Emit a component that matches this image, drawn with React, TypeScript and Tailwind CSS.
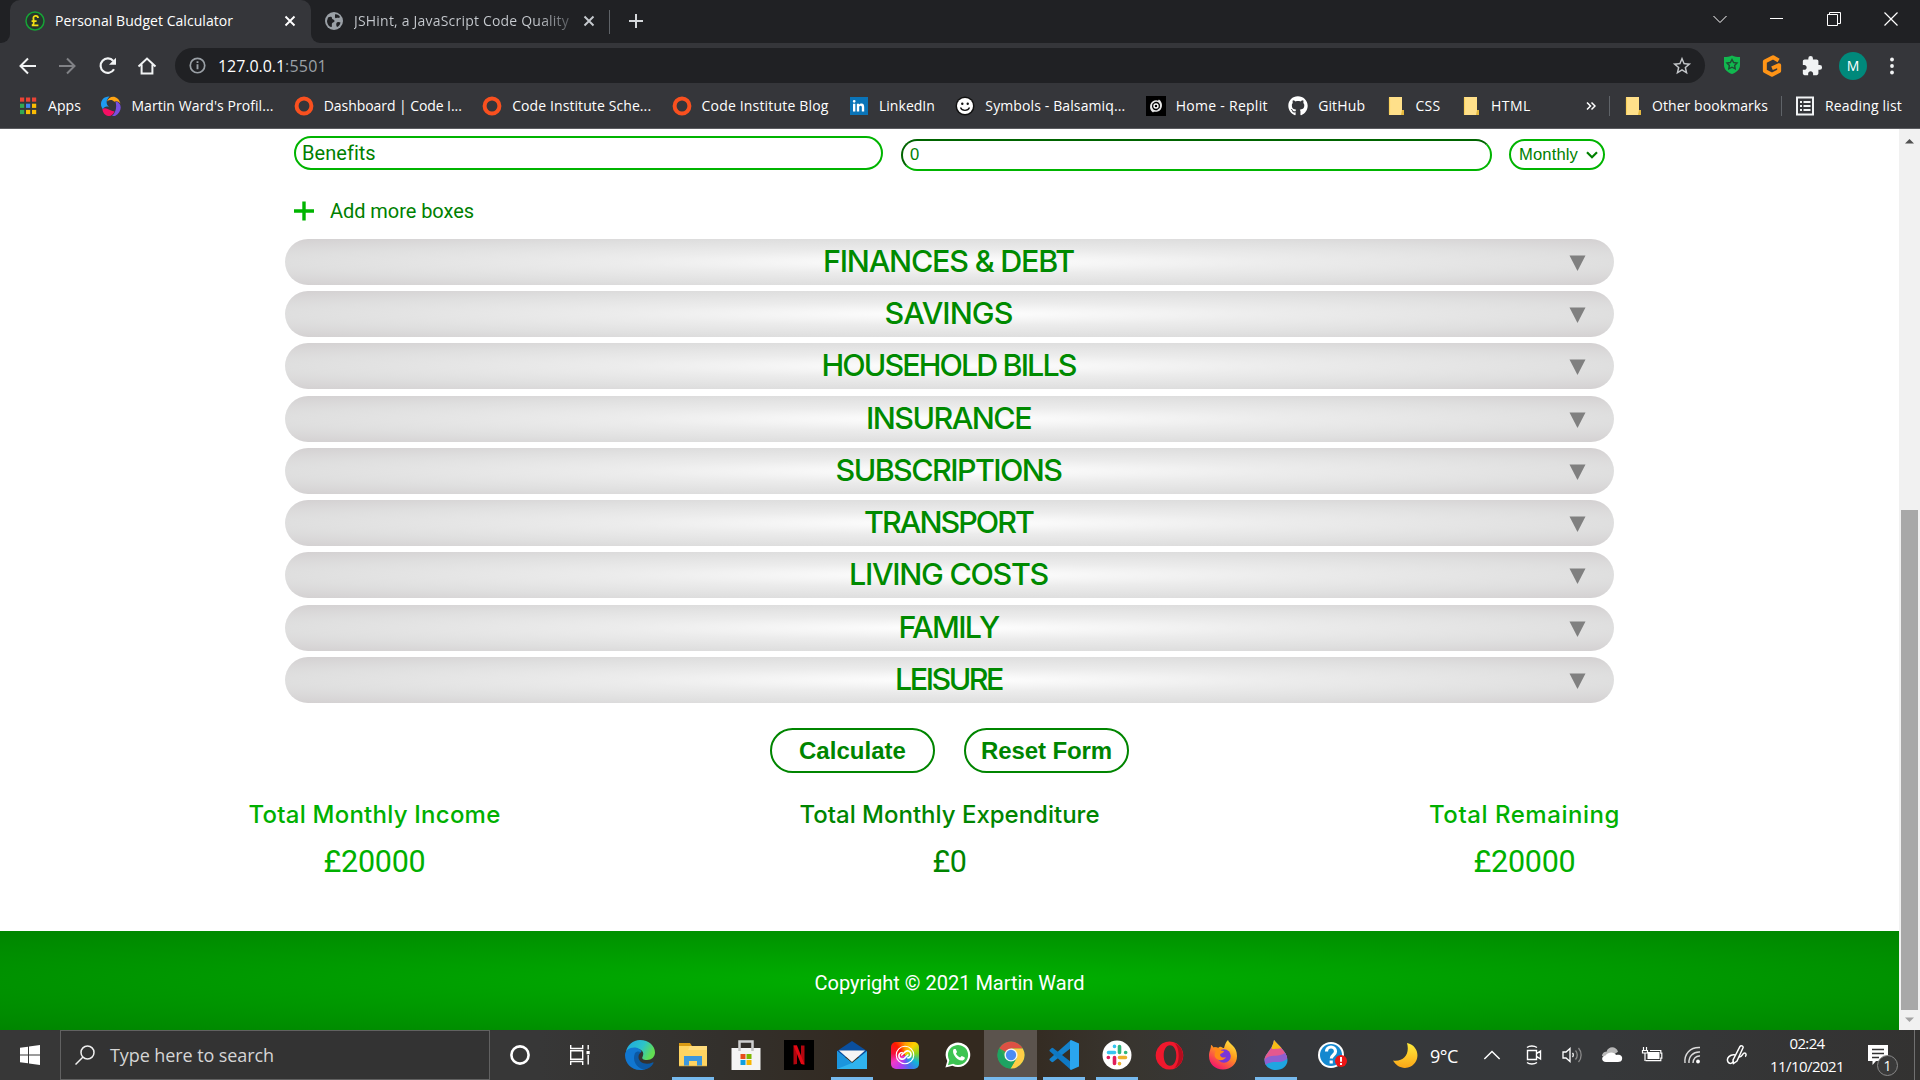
import React, { useLayoutEffect, useRef } from "react";
import { FaGithub, FaLinkedinIn } from "react-icons/fa";
import { MdExtension, MdStarBorder } from "react-icons/md";

const UI = "font-['Open_Sans',sans-serif]";

/* Single-line text whose tracking is adjusted so that it fills a given width. */
function Fit({ w, className = "", children }: { w: number; className?: string; children: string }) {
  const inner = useRef<HTMLSpanElement>(null);
  useLayoutEffect(() => {
    const el = inner.current;
    if (!el) return;
    el.style.letterSpacing = "0px";
    const natural = el.getBoundingClientRect().width;
    el.style.letterSpacing = `${(w - natural) / Math.max(1, children.length)}px`;
  }, [w, children]);
  return (
    <span className={`block shrink-0 whitespace-nowrap ${className}`} style={{ width: w }}>
      <span ref={inner} className="inline-block">{children}</span>
    </span>
  );
}

function Svg({ s = 20, vb = "0 0 20 20", className = "", children }: { s?: number; vb?: string; className?: string; children: React.ReactNode }) {
  return (
    <svg width={s} height={s} viewBox={vb} fill="none" className={`block shrink-0 ${className}`}>
      {children}
    </svg>
  );
}

/* ---------- browser chrome ---------- */

const CloseX = ({ className }: { className: string }) => (
  <Svg s={18} vb="0 0 18 18" className={className}>
    <path d="M4.500 4.500l9 9M13.500 4.500l-9 9" stroke="currentColor" strokeWidth="1.900" />
  </Svg>
);

function TabStrip() {
  return (
    <div className={`flex h-[43px] bg-[#202124] text-sm ${UI}`}>
      <div className="flex w-[10px] items-end bg-[#35363a]"><div className="h-full w-full rounded-br-[9px] bg-[#202124]" /></div>
      <div className="flex w-[301px] items-center rounded-t-[10px] bg-[#35363a] pb-[2px] pl-[15px]">
        <Svg>
          <circle cx="10" cy="10" r="9" stroke="#16a336" strokeWidth="1.500" fill="#26352c" />
          <path d="M13 7c0-2.600-4.600-3-4.600 0 0 2 .9 3.400.1 6-.4.900-1 1.300-1.700 1.400h6.600M6.600 10.200h5" stroke="#f2df13" strokeWidth="1.800" />
        </Svg>
        <Fit w={178} className="ml-[10px] text-white">Personal Budget Calculator</Fit>
        <CloseX className="ml-[48px] text-white" />
      </div>
      <div className="flex w-[298px] items-center bg-[#35363a]">
        <div className="flex h-full w-full items-center rounded-bl-[9px] bg-[#202124] pb-[2px] pl-[13px]">
          <Svg>
            <circle cx="10" cy="10" r="9" fill="#9aa0a6" />
            <path d="M4 6.500c2-1 4-1 4 .8 0 1.500 2.500 1 2.500 2.700s-2 1-2.500 2.500.5 3.500-1 3.500S3 13 3 10zM11 3.500c1.500-.6 4 .6 5 2.500-1 1.500-2.500.5-3.500 1s-2-.5-1.500-1.500zM12.500 12c1-1.500 3-1 4-.5-.5 2.500-2 4-3.500 4.500-.8-1-1-3-.5-4z" fill="#202124" />
          </Svg>
          <Fit w={215} className="ml-[10px] bg-linear-to-r from-[#c8ccd1] from-85% to-[#5b5e62] bg-clip-text text-transparent">JSHint, a JavaScript Code Quality</Fit>
          <CloseX className="ml-[11px] text-[#c6cacf]" />
        </div>
      </div>
      <div className="mt-[10px] h-[24px] w-px bg-[#5f6368]" />
      <Svg s={18} vb="0 0 18 18" className="mt-[12px] ml-[17px] text-[#d5d8db]">
        <path d="M9 2v14M2 9h14" stroke="currentColor" strokeWidth="2" />
      </Svg>
      <div className="ml-auto flex h-[37px] text-white">
        <div className="flex w-[57px] items-center justify-center"><Svg s={14} vb="0 0 14 14"><path d="M.5 4l6.500 6.500L13.500 4" stroke="currentColor" strokeWidth="1" /></Svg></div>
        <div className="flex w-[57px] items-center justify-center"><div className="h-px w-[13px] bg-white" /></div>
        <div className="flex w-[57px] items-center justify-center"><Svg s={14} vb="0 0 14 14"><path d="M.5 2.500h10v11H.5zM2.500 2.500V.5h11v11H11" stroke="currentColor" /></Svg></div>
        <div className="flex w-[58px] items-center justify-center"><Svg s={14} vb="0 0 14 14"><path d="M.5.500l13 13M13.500.500l-13 13" stroke="currentColor" strokeWidth="1.200" /></Svg></div>
      </div>
    </div>
  );
}

function Toolbar() {
  return (
    <div className={`flex h-[45px] items-center bg-[#35363a] pl-[18px] text-white ${UI}`}>
      <Svg><path d="M18 10H3M10 2.500L2.500 10l7.500 7.500" stroke="#f1f3f4" strokeWidth="2" /></Svg>
      <Svg className="ml-[19px]"><path d="M2 10h15M10 2.500l7.500 7.500-7.500 7.500" stroke="#818286" strokeWidth="2" /></Svg>
      <Svg className="ml-[21px]"><path d="M16 13.300A7.200 7.200 0 1 1 15.300 5" stroke="#f1f3f4" strokeWidth="2.200" /><path d="M18 1.800v7h-7z" fill="#f1f3f4" /></Svg>
      <Svg className="ml-[19px]"><path d="M1.500 10.500L10 2.500l8.500 8M4.600 8.500v9h10.800v-9" stroke="#f1f3f4" strokeWidth="2" /></Svg>
      <div className="ml-[18px] flex h-[35px] w-[1530px] items-center rounded-full bg-[#202124] pl-[14px] pr-[12px]">
        <Svg s={17}><circle cx="10" cy="10" r="8.500" stroke="#9aa0a6" strokeWidth="2" /><path d="M10 8.500v6M10 5v2.200" stroke="#9aa0a6" strokeWidth="2.200" /></Svg>
        <Fit w={67} className="ml-[12px] text-[16px]">127.0.0.1</Fit>
        <Fit w={42} className="text-[16px] text-[#9aa0a6]">:5501</Fit>
        <MdStarBorder className="ml-auto size-[22px] text-[#c4c7ca]" />
      </div>
      <Svg s={20} className="mb-[2px] ml-[17px]">
        <path d="M10 .5c2.500 1.300 5 1.500 8 1.500v8c0 5-4 7.500-8 9-4-1.500-8-4-8-9V2c3 0 5.500-.2 8-1.500z" fill="#11b84f" />
        <path d="M10 4.500l1.600 3 3.400.5-2.400 2.400.6 3.400-3.200-1.600-3.200 1.600.6-3.400L5 8l3.400-.5z" stroke="#1f4c33" strokeWidth="1.400" />
      </Svg>
      <Svg s={22} className="ml-[19px]">
        <path d="M16 5l-5-3-7.500 4v8.500L10 18l6.500-3.500V9.200L10 12" stroke="#ff9416" strokeWidth="3.600" strokeLinejoin="round" />
      </Svg>
      <MdExtension className="ml-[18px] size-[22px] text-[#f1f3f4]" />
      <div className="ml-[16px] flex size-[28px] items-center justify-center rounded-full bg-[#00897b] text-[14px]">M</div>
      <Svg className="ml-[15px]"><circle cx="10" cy="3.500" r="1.900" fill="#f1f3f4" /><circle cx="10" cy="10" r="1.900" fill="#f1f3f4" /><circle cx="10" cy="16.500" r="1.900" fill="#f1f3f4" /></Svg>
    </div>
  );
}

const Ring = () => <Svg><ellipse cx="10" cy="10" rx="7.400" ry="7.600" stroke="#f9501f" strokeWidth="4" /></Svg>;
const Folder = () => (
  <Svg><path d="M3 1h13v13h2v5H3z" fill="#ffe08a" /><path d="M16 14h2v5h-3z" fill="#e5b93f" /><path d="M3.500 1.500v17" stroke="#fbd25c" strokeWidth="1.200" /></Svg>
);
const AppsGrid = () => (
  <Svg>
    {["#ea4335", "#ea4335", "#ea4335", "#34a853", "#4285f4", "#fbbc04", "#34a853", "#fbbc04", "#fbbc04"].map((c, i) => (
      <rect key={i} x={2 + (i % 3) * 6} y={1.5 + Math.floor(i / 3) * 6.2} width="4.200" height="4.200" fill={c} />
    ))}
  </Svg>
);
const Swirl = () => (
  <Svg>
    <path d="M8.500.500C1 0-2.500 8 2 13.500c1-3 3.500-3.500 6-2.500C4.500 8 5 4 8.500.500z" fill="#1e9bf0" />
    <path d="M6 5.500C8-1 17-1.500 19.500 7.500c-2.500-2.500-4.500-2.700-6.300-1.700C11.500 3.500 8.500 3.500 6 5.500z" fill="#ffa412" />
    <path d="M14.500 5.500c6.500.5 7.500 10.500-.5 14.500-1.500.3-3 0-3 0 4-3.500 5-9 3.500-14.500z" fill="#7a4fe0" />
    <path d="M1.500 13c4-2.500 7 2 12 2.500-1.500 3.500-4 4.700-6 4.500-3.500-.5-6-3.500-6-7z" fill="#f50f64" />
  </Svg>
);

const bookmarks: { label: string; w: number; icon: React.ReactNode }[] = [
  { label: "Apps", w: 33, icon: <AppsGrid /> },
  { label: "Martin Ward's Profil...", w: 142, icon: <Swirl /> },
  { label: "Dashboard | Code I...", w: 138, icon: <Ring /> },
  { label: "Code Institute Sche...", w: 139, icon: <Ring /> },
  { label: "Code Institute Blog", w: 127, icon: <Ring /> },
  { label: "LinkedIn", w: 56, icon: <span className="flex size-[18px] items-center justify-center bg-[#0a74b8]"><FaLinkedinIn className="size-[13px]" /></span> },
  {
    label: "Symbols - Balsamiq...", w: 140,
    icon: <Svg><circle cx="10" cy="10" r="9.500" fill="#111" /><circle cx="10" cy="10" r="8" fill="#fff" /><circle cx="7.300" cy="7.800" r="1.200" fill="#111" /><circle cx="12.700" cy="7.800" r="1.200" fill="#111" /><path d="M5.500 11.500c1.500 3.800 7.500 3.800 9 0" stroke="#111" strokeWidth="1.300" /></Svg>,
  },
  {
    label: "Home - Replit", w: 92,
    icon: <Svg><rect width="20" height="20" fill="#000" /><circle cx="10" cy="10" r="2" stroke="#fff" strokeWidth="1.400" /><path d="M14.500 11.500C16 7 12 4 8.500 5.200M5.500 8.500C4 13 8 16 11.500 14.800M8.500 5.200C4 7 3.500 13 7.500 16M11.500 14.800C16 13 16.500 7 12.500 4" stroke="#e8e8e8" strokeWidth="1.500" /></Svg>,
  },
  { label: "GitHub", w: 47, icon: <FaGithub className="size-[20px]" /> },
  { label: "CSS", w: 25, icon: <Folder /> },
  { label: "HTML", w: 40, icon: <Folder /> },
];

function BookmarksBar() {
  return (
    <div className={`h-[41px] border-b border-[#5b5c60] bg-[#35363a] text-sm text-white ${UI}`}>
      <div className="flex h-[36px] items-center pl-[18px] pr-[18px]">
        <div className="flex gap-[20.4px]">
          {bookmarks.map((b) => (
            <div key={b.label} className="flex items-center gap-[10px]">
              <span className="flex w-[20px] shrink-0 justify-center">{b.icon}</span>
              <Fit w={b.w}>{b.label}</Fit>
            </div>
          ))}
        </div>
        <Svg s={10} vb="0 0 10 10" className="ml-auto"><path d="M1 1.500L4.500 5 1 8.500M5.500 1.500L9 5 5.500 8.500" stroke="#fff" strokeWidth="1.500" /></Svg>
        <div className="ml-[13px] h-[20px] w-px bg-[#5f6368]" />
        <span className="ml-[13px]"><Folder /></span>
        <Fit w={116} className="ml-[9px]">Other bookmarks</Fit>
        <div className="ml-[13px] h-[20px] w-px bg-[#5f6368]" />
        <Svg className="ml-[13px]"><path d="M2 1.500h16v17H2z" stroke="#f1f3f4" strokeWidth="2" /><path d="M5 6h2M5 10h2M5 14h2M8.500 6h7M8.500 10h7M8.500 14h7" stroke="#f1f3f4" strokeWidth="1.800" /></Svg>
        <Fit w={77} className="ml-[10px]">Reading list</Fit>
      </div>
    </div>
  );
}

/* ---------- page ---------- */

const sections: [string, number][] = [
  ["FINANCES & DEBT", 251], ["SAVINGS", 128], ["HOUSEHOLD BILLS", 254], ["INSURANCE", 165], ["SUBSCRIPTIONS", 226],
  ["TRANSPORT", 169], ["LIVING COSTS", 199], ["FAMILY", 100], ["LEISURE", 107],
];

function BudgetPage() {
  return (
    <main className="flex w-[1899px] flex-col bg-white font-['Roboto',sans-serif] text-[#008000]">
      <div className="mt-[7px] flex h-[34px] items-start pl-[294px]">
        <div className="flex h-[34px] w-[589px] items-center rounded-full border-2 border-[#00b400] pl-[6px] text-[20px]"><Fit w={73}>Benefits</Fit></div>
        <div className="mt-[3px] ml-[18px] flex h-[32px] w-[591px] items-center rounded-full border-2 border-t-[#006400] border-r-[#00b400] border-b-[#00b400] border-l-[#006400] pl-[7px] font-['Liberation_Sans',sans-serif] text-[16.6px]">0</div>
        <div className="mt-[3px] ml-[17px] flex h-[31px] w-[96px] items-center rounded-full border-2 border-[#00b400] pl-[8px] font-['Liberation_Sans',sans-serif] text-[16.6px]">
          <Fit w={59} className="pt-px">Monthly</Fit>
          <Svg s={12} vb="0 0 12 12" className="ml-[8px]"><path d="M1 3.300l5 5 5-5" stroke="#008000" strokeWidth="2.200" /></Svg>
        </div>
      </div>
      <div className="mt-[20px] flex h-[41px] items-center pl-[294px] text-[20px]">
        <Svg><path d="M10 .5v19M0 10h20" stroke="#00b400" strokeWidth="3.400" /></Svg>
        <Fit w={144} className="ml-[16px]">Add more boxes</Fit>
      </div>
      <div className="mt-[8px] flex flex-col gap-[6.23px] px-[285px]">
        {sections.map(([name, w]) => (
          <div key={name} className="relative flex h-[46px] items-center justify-center rounded-full bg-[radial-gradient(#ffffff,#ececec_35%,#dfdfdf_70%,#d3d0d1)] pr-[2px]">
            <Fit w={w} className="-mt-[3px] font-['Inter',sans-serif] text-[30.5px] leading-[45px] font-medium text-[#008a00]">{name}</Fit>
            <Svg s={17} vb="0 0 17 17" className="absolute top-[16px] right-[28px]"><path d="M.5.500h16L8.500 16z" fill="#808080" /></Svg>
          </div>
        ))}
      </div>
      <div className="mt-[25.160px] flex justify-center gap-[29px] font-['Liberation_Sans',sans-serif] text-[24px] font-bold text-[#008500]">
        <button className="flex h-[45px] w-[165px] items-center justify-center rounded-full border-2 border-[#008500] pt-px"><Fit w={107}>Calculate</Fit></button>
        <button className="flex h-[45px] w-[165px] items-center justify-center rounded-full border-2 border-[#008500] pt-px"><Fit w={131}>Reset Form</Fit></button>
      </div>
      <div className="mt-[27px] grid grid-cols-3 px-[87px]">
        <Total title="Total Monthly Income" w={252} value="£20000" vw={102} color="text-[#00b000]" />
        <Total title="Total Monthly Expenditure" w={300} value="£0" vw={34} color="text-[#008500]" />
        <Total title="Total Remaining" w={191} value="£20000" vw={102} color="text-[#00b000]" />
      </div>
      <footer className="mt-[49px] flex h-[99px] items-center justify-center bg-[radial-gradient(#00b000,#008500)] pt-[5px] text-[20px] text-white">
        <Fit w={270}>Copyright © 2021 Martin Ward</Fit>
      </footer>
    </main>
  );
}

function Total({ title, w, value, vw, color }: { title: string; w: number; value: string; vw: number; color: string }) {
  return (
    <div className={`flex flex-col items-center ${color}`}>
      <Fit w={w} className="font-['Inter',sans-serif] text-[24px] leading-[29px] font-medium">{title}</Fit>
      <Fit w={vw} className="mt-[13px] text-[30.500px] leading-[40px]">{value}</Fit>
    </div>
  );
}

function Scrollbar() {
  return (
    <div className="flex w-[21px] flex-col items-center bg-[#f1f1f1] pt-[8px]">
      <Svg s={9} vb="0 0 9 9"><path d="M0 6.500h9L4.500 2z" fill="#505050" /></Svg>
      <div className="mt-[364px] h-[500px] w-[17px] bg-[#a8a8a8]" />
      <Svg s={9} vb="0 0 9 9" className="mt-[5px]"><path d="M0 2.500h9L4.500 7z" fill="#a3a3a3" /></Svg>
    </div>
  );
}

/* ---------- taskbar ---------- */

const V30 = "0 0 30 30";
const apps: { name: string; line?: string; active?: boolean; icon: React.ReactNode }[] = [
  {
    name: "edge",
    icon: <Svg s={30} vb={V30}><defs><linearGradient id="edg" x1="0" y1="0" x2="1" y2=".4"><stop offset="0" stopColor="#1ca6e6" /><stop offset=".6" stopColor="#2dc3c9" /><stop offset="1" stopColor="#62dd52" /></linearGradient></defs>
      <path d="M1 12C2 5 8 0 15 0c9 0 15 6 15 12.500 0 4.500-3.500 7.500-8 7.500-4 0-5.500-1.500-4.500-3 3-6-3-9-8-8-4 .5-7 2-8.500 3z" fill="url(#edg)" />
      <path d="M0 15c0-5 5-8 10.500-7.500 3 .3 5.500 2 6 4.500-3 0-5 3-5 6.500 0 6 6 10.500 12 9C21 29.500 18 30 15 30 6 30 0 23 0 15z" fill="#1177d1" />
      <path d="M10 13c-3 7 1 15 9 16.500 4-.5 8-3 9.500-6.500.3-.8-.3-1-1-.6-6 3-14 .6-14-5.400 0-2 1-3.500 2.500-5-2.500-1-4.800-.6-6 1z" fill="#0c59a4" /></Svg>,
  },
  {
    name: "explorer", line: "w-[42px]",
    icon: <Svg s={30} vb={V30}><path d="M1 3h11l2 3v4H1z" fill="#d99a14" /><path d="M1 6h28v20H1z" fill="#ffd461" /><path d="M12 6h17v4H10z" fill="#ffdc7d" /><path d="M6 16h18v10h-5v-5h-8v5H6z" fill="#3c97dd" /><path d="M1 25h28v1.500H1z" fill="#e5b440" opacity=".5" /></Svg>,
  },
  {
    name: "store",
    icon: <Svg s={30} vb={V30}><path d="M8.500 12V1.500h13V12" stroke="#cfcfcf" strokeWidth="2.500" /><path d="M.5 8h29v22H.5z" fill="#f4f4f4" /><path d="M8.500 8v3M21.500 8v3" stroke="#c4c4c4" strokeWidth="2.500" /><path d="M9.500 14h5v5h-5z" fill="#e84e1b" /><path d="M15.500 14h5v5h-5z" fill="#7db700" /><path d="M9.500 20h5v5h-5z" fill="#0f9fe2" /><path d="M15.500 20h5v5h-5z" fill="#f7b500" /></Svg>,
  },
  {
    name: "netflix",
    icon: <Svg s={30} vb={V30}><path d="M0 0h30v30H0z" fill="#000" /><path d="M9.500 5.500h3.500V24l-3.500.5zM17 5.500h3.500v19L17 24z" fill="#b1060f" /><path d="M9.500 5.500H13l7.500 19L17 24z" fill="#e50914" /></Svg>,
  },
  {
    name: "mail", line: "w-[42px]",
    icon: <Svg s={30} vb={V30}><path d="M0 11L15 1l15 10v6H0z" fill="#0a4f9e" /><path d="M2 10.500h26L15 22z" fill="#f5f5f5" /><path d="M0 11l15 12L30 11v18H0z" fill="#30b3ee" /><path d="M0 11l15 12-15 6z" fill="#1b95de" /></Svg>,
  },
  {
    name: "creative-cloud",
    icon: <span className="flex h-[27px] w-[28px] items-center justify-center rounded-[5px] bg-[conic-gradient(#ff9a00,#ffd000,#8ad41f,#12b5d8,#4b6cf0,#b03af0,#f03ac9,#f5123c,#ff1a00,#ff9a00)]"><Svg s={20} vb="0 0 24 24"><circle cx="12" cy="12" r="10.500" stroke="#fff" strokeWidth="1.300" /><path d="M15.500 15.500a4.200 4.200 0 1 0-3-7.500L8 12M8.500 9a4 4 0 1 0 2.800 7l4.200-4" stroke="#fff" strokeWidth="2" strokeLinecap="round" /></Svg></span>,
  },
  {
    name: "whatsapp",
    icon: <Svg s={28} vb={V30}><path d="M1.500 28.500l2-7.200A13.200 13.200 0 1 1 9 26.500z" fill="#fff" /><path d="M4.200 26l1.500-5.500a10.800 10.800 0 1 1 4.100 4z" fill="#3dc452" /><path d="M10.500 8.500c-3 3 2.500 13 9.500 12.500 2-.5 2.800-3 2-3.500l-3-1.500-1.700 1.700c-2-.7-3.800-2.500-4.500-4.200l1.200-1.700-1.500-3.300z" fill="#fff" /></Svg>,
  },
  {
    name: "chrome", line: "w-full", active: true,
    icon: <Svg s={28} vb={V30}><circle cx="15" cy="15" r="14.500" fill="#34a853" /><path d="M15 15L2.500 7.700A14.500 14.500 0 0 1 27.600 8H15z" fill="#dd5144" /><path d="M15 8h12.600A14.500 14.500 0 0 1 14.500 29.500L21 18.500z" fill="#ffcd46" /><path d="M2.500 7.700A14.500 14.500 0 0 0 14.500 29.500l6.500-11L9 18.500z" fill="#1da462" /><circle cx="15" cy="15" r="7" fill="#f5f5f5" /><circle cx="15" cy="15" r="5.500" fill="#4d8bf5" /></Svg>,
  },
  {
    name: "vscode", line: "w-[42px]",
    icon: <Svg s={30} vb={V30}><path d="M22 0v8L4 22l-1 .2L.5 20v-1z" fill="#1482cc" /><path d="M22 30v-8L4 8l-1-.2L.5 10v1z" fill="#0f79c4" /><path d="M22 0l8 3.500v23L22 30l-1-1V1z" fill="#2aa5ee" /></Svg>,
  },
  {
    name: "slack", line: "w-[42px]",
    icon: <Svg s={30} vb={V30}><circle cx="15" cy="15" r="14.500" fill="#fff" />
      <g strokeWidth="3.600" strokeLinecap="round">
        <path d="M6.500 12.500h6M12.500 6.300v.1" stroke="#36c5f0" />
        <path d="M17.500 6.500v6M23.700 12.500h-.1" stroke="#2eb67d" />
        <path d="M17.500 17.500h6M17.500 23.700v-.1" stroke="#ecb22e" />
        <path d="M12.500 17.500v6M6.300 17.500h.1" stroke="#e01e5a" />
      </g></Svg>,
  },
  {
    name: "opera",
    icon: <Svg s={29} vb={V30}><path fillRule="evenodd" d="M15 .5a14.300 14.500 0 1 0 .01 0zM15.500 4.500c4 0 6.500 4.500 6.500 10.500s-2.500 10.500-6.500 10.500S9 21 9 15s2.500-10.500 6.500-10.500z" fill="#f0182d" /><path d="M20 2c6 5 6 21 0 26 12-4 12-22 0-26z" fill="#b40d1e" /></Svg>,
  },
  {
    name: "firefox",
    icon: <Svg s={30} vb={V30}><defs><linearGradient id="ffx" x1=".9" y1="0" x2=".3" y2="1"><stop offset="0" stopColor="#fff04a" /><stop offset=".45" stopColor="#ff9b1c" /><stop offset="1" stopColor="#f5126e" /></linearGradient></defs>
      <path d="M20 0c1 4 9 6 9 16 0 8-6 13.500-14 13.500S1 24 1 16C1 11 3 9 3 5c1 0 2 1.500 2.500 2.500C7 7 9 7 10 8c3-3 4 0 6 0 1-3 1.500-6 4-8z" fill="url(#ffx)" /><circle cx="16" cy="16" r="6.800" fill="#7a35d8" /><path d="M5 8c4-1 7 0 8 2.500l3 .5c0 2-4 2.500-4 4 1 3 4 3 6 2-1 3-6 4.500-9 2-3-2-3-5-1-8z" fill="#ff8a16" /></Svg>,
  },
  {
    name: "paint", line: "w-[42px]",
    icon: <Svg s={30} vb={V30}><defs><clipPath id="drop"><path d="M13 0c3 4 13.500 12 13.500 20 0 6-5 10-11.500 10S3.500 26 3.500 20C3.500 14 12 9 13 0z" /></clipPath></defs>
      <g clipPath="url(#drop)"><path d="M0 0h30v30H0z" fill="#1fa5e0" /><path d="M0 8l12-9h18v15C20 24 10 12 0 24z" fill="#e5588f" /><path d="M4 19c6-6 13 0 23-8v7c-8 8-14 0-24 8z" fill="#8f5fd0" /><path d="M10-1h14v9c-4 0-7 1-13 1z" fill="#f6bd16" /></g></Svg>,
  },
];

function Taskbar() {
  return (
    <div className={`flex h-[50px] items-stretch bg-[linear-gradient(90deg,#373737_0px,#373737_540px,#33302c_720px,#33291f_880px,#33291f_1010px,#38352f_1130px,#36383b_1260px,#36383a_1600px,#333231_1920px)] text-white ${UI}`}>
      <div className="flex w-[60px] items-center justify-center"><Svg s={20}><path d="M0 2.800L8 1.700v7.800H0zM9 1.500L20 0v9.500H9zM0 10.500h8v7.800l-8-1.100zM9 10.500h11V20L9 18.500z" fill="#fff" /></Svg></div>
      <div className="flex w-[430px] items-center border border-[#616161] bg-[#333333] pl-[14px]">
        <Svg><circle cx="12.500" cy="7.500" r="6.500" stroke="#f0f0f0" strokeWidth="1.500" /><path d="M8 12L.5 19.500" stroke="#f0f0f0" strokeWidth="1.500" /></Svg>
        <Fit w={164} className="ml-[15px] text-[18px] text-[#d5d5d5]">Type here to search</Fit>
      </div>
      <div className="flex w-[60px] items-center justify-center"><Svg><circle cx="10" cy="10" r="8.600" stroke="#fff" strokeWidth="2.600" /></Svg></div>
      <div className="flex w-[60px] items-center justify-center"><Svg s={20}><path d="M.7 0v3.500h12V0M.7 20v-3.500h12V20M.7 5.700h12v8.600H.7zM18.200 0v4.500M18.200 10v9.500" stroke="#fff" strokeWidth="1.400" /><path d="M16.500 6h3.200v3.200h-3.200z" fill="#fff" /></Svg></div>
      <div className="ml-[3px] flex">
        {apps.map((a) => (
          <div key={a.name} className={`flex w-[53px] flex-col items-center ${a.active ? "bg-[#5b534d]" : ""}`}>
            <div className="flex h-[47px] items-center pt-[3px]">{a.icon}</div>
            {a.line && <div className={`h-[3px] bg-[#76b9ed] ${a.line}`} />}
          </div>
        ))}
      </div>
      <div className="flex w-[60px] items-center pl-[15px]">
        <Svg s={30} vb={V30}><circle cx="14" cy="15" r="13" fill="#fff" /><circle cx="14" cy="15" r="11" fill="#1488cf" /><path d="M9.500 11.500c0-6 9-6 9 0 0 3.500-4.200 3.500-4.200 7M14.200 20.500v3" stroke="#fff" strokeWidth="3.200" /><circle cx="24" cy="21" r="6" fill="#ee1515" /><path d="M24 17v4.800M24 23v2" stroke="#fff" strokeWidth="1.900" /></Svg>
      </div>
      <Tray />
    </div>
  );
}

function Tray() {
  return (
    <div className="ml-auto flex w-[527px] items-center">
      <Svg s={25} vb="0 0 25 25"><defs><linearGradient id="moon" x1="0" y1="0" x2="0" y2="1"><stop offset="0" stopColor="#ffec3d" /><stop offset="1" stopColor="#fba617" /></linearGradient></defs><path d="M14 0c14 3 13.500 21 1 24.500C9 26 3 23 0 17.500 11 19 17 11 14 0z" fill="url(#moon)" /></Svg>
      <Fit w={28} className="ml-[12px] pt-[2px] text-[18px]">9°C</Fit>
      <Svg s={18} className="ml-[25px]"><path d="M1.500 14.500L10 6l8.500 8.500" stroke="#fff" strokeWidth="1.600" /></Svg>
      <Svg s={20} className="ml-[23px]"><path d="M3.500 5.500h9v9h-9zM12.500 8.700l4-2.700v8l-4-2.700M3 2.500c2.500-2 7-2 10 0M3 17.500c2.500 2 7 2 10 0" stroke="#fff" strokeWidth="1.400" /></Svg>
      <Svg s={20} className="ml-[18px]"><path d="M1 7h3l4-3.500v13L4 13H1z" stroke="#fff" strokeWidth="1.300" /><path d="M10.500 8c1 1 1 3 0 4" stroke="#fff" strokeWidth="1.300" /><path d="M13.500 5.500c2.300 2.500 2.300 6.500 0 9M16.500 3c3.500 4 3.500 10 0 14" stroke="#8b8b8b" strokeWidth="1.300" /></Svg>
      <Svg s={22} vb="0 0 22 22" className="ml-[19px]"><path d="M1 12c0-3 3-4.500 4.500-4.200 1.500-6 10-6 11.500 0l-9 6z" fill="#b7b7b7" /><path d="M5 18c-5 0-5-6-.5-6.500C8 7 14 8.500 15 11c4-1 7 1 6 4.500-.5 1.800-2 2.500-4 2.500z" fill="#fff" /></Svg>
      <Svg s={22} vb="0 0 22 22" className="ml-[18px]"><path d="M6.500 8h12v7h-12z" fill="#fff" /><path d="M4.500 16.700h15.300v-2.500h1v-5h-1V6.500H9" stroke="#fff" strokeWidth="1.200" /><path d="M2.500 3v3M5.500 3v3M1.500 6.500h5v2.500h-5zM4 9v8" stroke="#fff" strokeWidth="1.200" /></Svg>
      <Svg s={20} className="ml-[19px]"><path d="M3 18C2 9 8 2 18 2.500M7 18c-.5-6 4-11.500 11-11M11 18c0-4 3-7.500 7-7" stroke="#dcdcdc" strokeWidth="1.400" /><circle cx="16" cy="16.500" r="1.900" fill="#fff" /></Svg>
      <Svg s={22} vb="0 0 22 22" className="ml-[24px]"><path d="M7 16L14 2.500c1-1.500 3.500-.5 3 1.300L11 17l-3.500 2.500zM9.500 11C4 10 0 14 2 18c2 3 6 .5 5-2M13.500 13c3 0 3-4 5-4s2 3 .5 3.500" stroke="#fff" strokeWidth="1.500" /></Svg>
      <div className="ml-[21px] flex w-[76px] flex-col items-center text-[15px] leading-[23px]">
        <Fit w={35}>02:24</Fit>
        <Fit w={74}>11/10/2021</Fit>
      </div>
      <div className="relative mt-[15px] ml-[23px] h-[20px] w-[20px] self-start">
        <Svg s={20}><path d="M0 0h20v16H8l-3.500 4v-4H0z" fill="#fff" /><path d="M4 4.500h12M4 8.500h12M4 12.500h7" stroke="#333" strokeWidth="1.300" /></Svg>
        <span className="absolute top-[10px] left-[9px] flex size-[21px] items-center justify-center rounded-full border border-[#8a8a8a] bg-[#3a3a3a] text-[14px]">1</span>
      </div>
      <div className="ml-[26px] h-full w-px bg-[#707070]" />
    </div>
  );
}

export default function App() {
  return (
    <div className="h-[1080px] w-[1920px] overflow-hidden bg-white">
      <TabStrip />
      <Toolbar />
      <BookmarksBar />
      <div className="flex h-[901px]">
        <BudgetPage />
        <Scrollbar />
      </div>
      <Taskbar />
    </div>
  );
}
